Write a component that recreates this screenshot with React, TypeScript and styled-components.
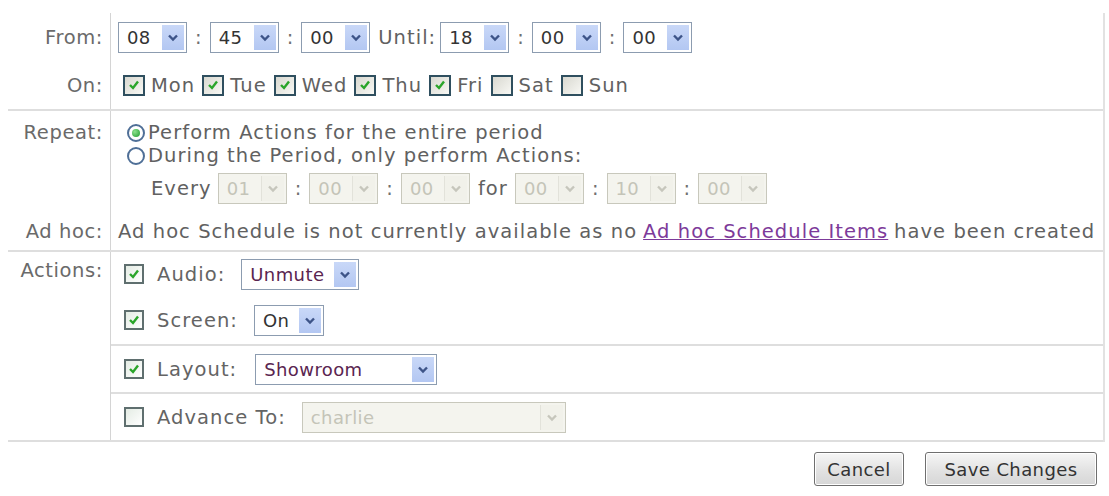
import * as React from 'react';
import styled, { createGlobalStyle, css } from 'styled-components';

const GlobalStyle = createGlobalStyle`
    html, body {
        margin: 0;
        padding: 0;
        background: #ffffff;
    }
    body {
        font-family: "DejaVu Sans", Verdana, sans-serif;
        font-size: 19.5px;
        letter-spacing: 1.05px;
        color: #616161;
    }
`;

const Page = styled.div`
    padding: 13px 4px 0 8px;
`;

const Form = styled.div`
    border-right: 2px solid #e2e2e2;
`;

const Section = styled.div`
    display: grid;
    grid-template-columns: 102px 1fr;
    border-bottom: 2px solid #dedede;
`;

const Label = styled.div`
    text-align: right;
    padding-right: 7px;
    color: #6a6a6a;
    display: flex;
    align-items: center;
    justify-content: flex-end;
    letter-spacing: 0.6px;
`;

const TopLabel = styled(Label)<{ $top: number }>`
    align-items: flex-start;
    padding-top: ${(p) => p.$top}px;
`;

const Cell = styled.div`
    border-left: 1px solid #d4d4d4;
    padding-left: 7px;
    display: flex;
    align-items: center;
    white-space: nowrap;
`;

const Row = styled.div<{ $height: number }>`
    display: contents;
    & > * {
        min-height: ${(p) => p.$height}px;
    }
`;

const Colon = styled.span`
    margin: 0 7px 0 8px;
    color: #707070;
`;

const InlineLabel = styled.span`
    margin: 0 4px 0 8px;
`;

const SelectBox = styled.span<{ $width: number; $disabled?: boolean }>`
    display: inline-flex;
    align-items: stretch;
    justify-content: space-between;
    box-sizing: border-box;
    width: ${(p) => p.$width}px;
    height: 31px;
    padding: 2px;
    border: 1px solid ${(p) => (p.$disabled ? '#c8c8bc' : '#8c9cb0')};
    background: ${(p) => (p.$disabled ? '#f4f4ee' : '#ffffff')};
    color: ${(p) => (p.$disabled ? '#c4c4b8' : '#333333')};
    font-size: 18px;
    letter-spacing: 0.4px;
`;

const SelectValue = styled.span`
    display: flex;
    align-items: center;
    padding-left: 6px;
    white-space: nowrap;
`;

const SelectArrow = styled.span<{ $disabled?: boolean }>`
    display: flex;
    align-items: center;
    justify-content: center;
    width: 22px;
    ${(p) =>
        p.$disabled
            ? css`
                  background: #f1f1ea;
                  border-left: 1px solid #e2e2da;
                  color: #c6c6bc;
              `
            : css`
                  background: linear-gradient(#c9d8f8, #b3c7f2);
                  color: #3d5488;
              `}
`;

const ValueAccent = styled.span`
    color: #5a2550;
`;

function Chevron(): React.ReactElement {
    return (
        <svg width="12" height="9" viewBox="0 0 12 9">
            <path d="M2 2.5 L6 6.5 L10 2.5" fill="none" stroke="currentColor" strokeWidth="2.4" />
        </svg>
    );
}

interface SelectProps {
    value: React.ReactNode;
    width?: number;
    disabled?: boolean;
}

function Select({ value, width = 69, disabled }: SelectProps): React.ReactElement {
    return (
        <SelectBox $width={width} $disabled={disabled}>
            <SelectValue>{value}</SelectValue>
            <SelectArrow $disabled={disabled}>
                <Chevron />
            </SelectArrow>
        </SelectBox>
    );
}

const DayBox = styled.span`
    display: inline-flex;
    align-items: center;
    justify-content: center;
    box-sizing: border-box;
    width: 22px;
    height: 21px;
    border: 2px solid #2f4f5f;
    background: linear-gradient(135deg, #d8d8d0, #f8f8f4);
    margin: 0 6px 0 7px;
    color: #2aa52a;
`;

const Day = styled.span`
    display: inline-flex;
    align-items: center;
    &:first-child > span {
        margin-left: 5px;
    }
`;

const ActionBox = styled.span`
    display: inline-flex;
    align-items: center;
    justify-content: center;
    box-sizing: border-box;
    width: 20px;
    height: 20px;
    border: 2px solid #5f6f6f;
    background: linear-gradient(135deg, #e4ece4, #ffffff);
    color: #2aa52a;
    margin: 0 13px 0 13px;
`;

function Check(): React.ReactElement {
    return (
        <svg width="12" height="12" viewBox="0 0 12 12">
            <path d="M2 6 L5 9 L10 2.5" fill="none" stroke="currentColor" strokeWidth="2.4" />
        </svg>
    );
}

const Radio = styled.span<{ $checked?: boolean }>`
    display: inline-flex;
    align-items: center;
    justify-content: center;
    box-sizing: border-box;
    width: 18px;
    height: 18px;
    border-radius: 50%;
    border: 2px solid #4f6f97;
    background: #ffffff;
    margin: 0 3px 0 9px;
    &::after {
        content: '';
        display: ${(p) => (p.$checked ? 'block' : 'none')};
        width: 8px;
        height: 8px;
        border-radius: 50%;
        background: radial-gradient(circle at 35% 35%, #8de28d, #1f9a2f);
    }
`;

const RepeatCell = styled(Cell)`
    flex-direction: column;
    align-items: flex-start;
    padding: 10px 0 8px 7px;
`;

const RadioLine = styled.div`
    display: flex;
    align-items: center;
    height: 23px;
`;

const EveryLine = styled.div`
    display: flex;
    align-items: center;
    margin: 5px 0 0 33px;
    height: 32px;
`;

const EveryLabel = styled.span`
    margin-right: 6px;
`;

const ForLabel = styled.span`
    margin: 0 7px 0 8px;
`;

const Link = styled.a`
    color: #7d3a9a;
    text-decoration: underline;
    margin: 0 0.3em;
`;

const ActionList = styled.div`
    display: flex;
    flex-direction: column;
    border-left: 1px solid #d4d4d4;
`;

const ActionGroup = styled.div`
    & + & {
        border-top: 2px solid #dedede;
    }
`;

const ActionRow = styled.div<{ $height: number }>`
    display: flex;
    align-items: center;
    height: ${(p) => p.$height}px;
`;

const ActionName = styled.span<{ $gap: number }>`
    margin-right: ${(p) => p.$gap}px;
    color: #646464;
`;

const Footer = styled.div`
    display: flex;
    justify-content: flex-end;
    gap: 21px;
    padding: 10px 8px 10px 0;
    margin-left: 8px;
    border-bottom: 2px solid #dedede;
`;

const Button = styled.button<{ $width: number }>`
    width: ${(p) => p.$width}px;
    height: 34px;
    font-family: inherit;
    font-size: 18px;
    letter-spacing: 0.4px;
    color: #333333;
    border: 1px solid #6f6f6f;
    border-radius: 3px;
    background: linear-gradient(#f6f6f6, #e2e2e2 55%, #d6d6d6);
    box-shadow: inset 0 0 0 1px #ffffff;
`;

const days = [
    { name: 'Mon', on: true },
    { name: 'Tue', on: true },
    { name: 'Wed', on: true },
    { name: 'Thu', on: true },
    { name: 'Fri', on: true },
    { name: 'Sat', on: false },
    { name: 'Sun', on: false },
];

export default function App(): React.ReactElement {
    return (
        <Page>
            <GlobalStyle />
            <Form>
                <Section>
                    <Row $height={48}>
                        <Label>From:</Label>
                        <Cell>
                            <Select value="08" />
                            <Colon>:</Colon>
                            <Select value="45" />
                            <Colon>:</Colon>
                            <Select value="00" />
                            <InlineLabel>Until:</InlineLabel>
                            <Select value="18" />
                            <Colon>:</Colon>
                            <Select value="00" />
                            <Colon>:</Colon>
                            <Select value="00" />
                        </Cell>
                    </Row>
                    <Row $height={48}>
                        <Label>On:</Label>
                        <Cell>
                            {days.map((d) => (
                                <Day key={d.name}>
                                    <DayBox>{d.on && <Check />}</DayBox>
                                    {d.name}
                                </Day>
                            ))}
                        </Cell>
                    </Row>
                </Section>

                <Section>
                    <TopLabel $top={10}>Repeat:</TopLabel>
                    <RepeatCell>
                        <RadioLine>
                            <Radio $checked />
                            Perform Actions for the entire period
                        </RadioLine>
                        <RadioLine>
                            <Radio />
                            During the Period, only perform Actions:
                        </RadioLine>
                        <EveryLine>
                            <EveryLabel>Every</EveryLabel>
                            <Select value="01" disabled />
                            <Colon>:</Colon>
                            <Select value="00" disabled />
                            <Colon>:</Colon>
                            <Select value="00" disabled />
                            <ForLabel>for</ForLabel>
                            <Select value="00" disabled />
                            <Colon>:</Colon>
                            <Select value="10" disabled />
                            <Colon>:</Colon>
                            <Select value="00" disabled />
                        </EveryLine>
                    </RepeatCell>
                    <Row $height={38}>
                        <Label>Ad hoc:</Label>
                        <Cell>
                            Ad hoc Schedule is not currently available as no
                            <Link>Ad hoc Schedule Items</Link>
                            have been created
                        </Cell>
                    </Row>
                </Section>

                <Section>
                    <TopLabel $top={7}>Actions:</TopLabel>
                    <ActionList>
                        <ActionGroup>
                            <ActionRow $height={44}>
                                <ActionBox>
                                    <Check />
                                </ActionBox>
                                <ActionName $gap={16}>Audio:</ActionName>
                                <Select value={<ValueAccent>Unmute</ValueAccent>} width={118} />
                            </ActionRow>
                            <ActionRow $height={48}>
                                <ActionBox>
                                    <Check />
                                </ActionBox>
                                <ActionName $gap={16}>Screen:</ActionName>
                                <Select value="On" width={70} />
                            </ActionRow>
                        </ActionGroup>
                        <ActionGroup>
                            <ActionRow $height={46}>
                                <ActionBox>
                                    <Check />
                                </ActionBox>
                                <ActionName $gap={18}>Layout:</ActionName>
                                <Select value={<ValueAccent>Showroom</ValueAccent>} width={182} />
                            </ActionRow>
                        </ActionGroup>
                        <ActionGroup>
                            <ActionRow $height={46}>
                                <ActionBox />
                                <ActionName $gap={16}>Advance To:</ActionName>
                                <Select value="charlie" width={264} disabled />
                            </ActionRow>
                        </ActionGroup>
                    </ActionList>
                </Section>
            </Form>
            <Footer>
                <Button $width={90}>Cancel</Button>
                <Button $width={172}>Save Changes</Button>
            </Footer>
        </Page>
    );
}
